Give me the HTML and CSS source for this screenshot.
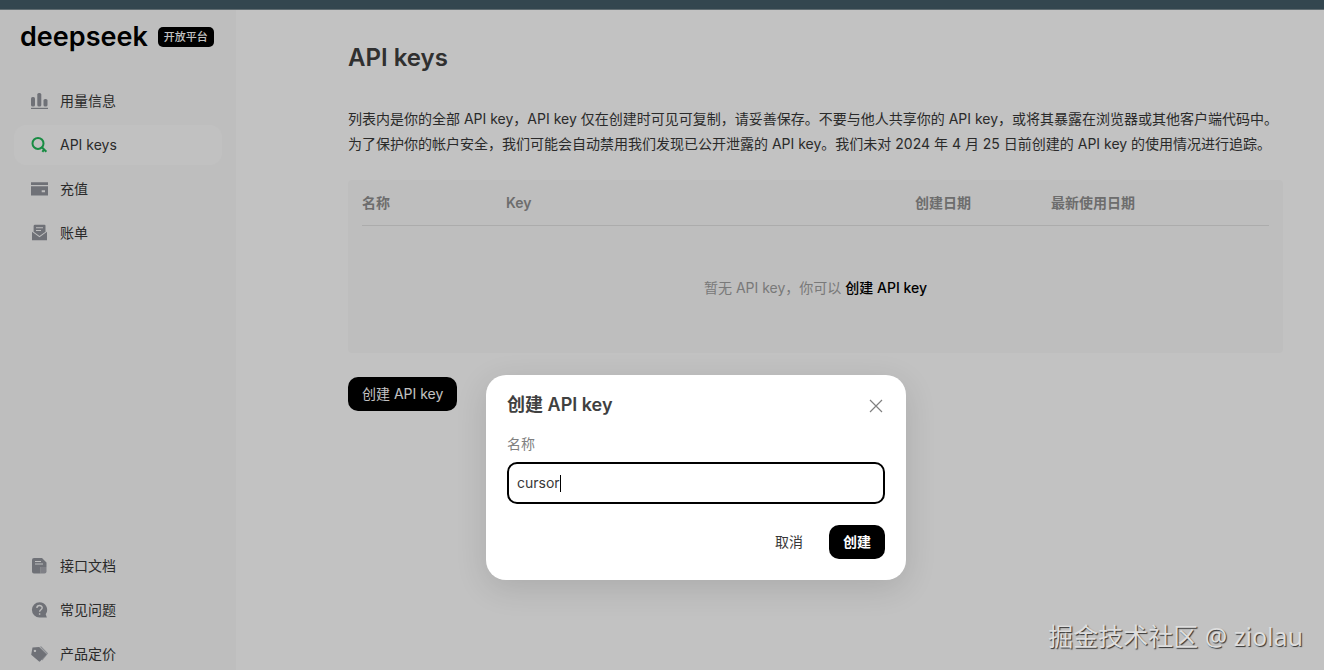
FILE: index.html
```html
<!DOCTYPE html>
<html lang="zh-CN">
<head>
<meta charset="utf-8">
<title>API keys</title>
<link rel="stylesheet" href="styles.css">
</head>
<body>
<div class="topbar"></div>
<div class="app">
  <aside class="sidebar">
    <div class="brand"><span class="wordmark">deepseek</span><span class="badge">开放平台</span></div>
    <nav class="nav">
      <a class="nav-item" href="#usage">
        <svg class="icon" viewBox="0 0 18 18"><rect x="1" y="5" width="4" height="9.500" rx="1.600"/><rect x="7.300" y="1" width="4" height="13.500" rx="1.600"/><rect x="13.500" y="7" width="4" height="7.500" rx="1.600"/><rect x="1" y="15.800" width="17" height="1.200"/></svg>
        用量信息</a>
      <a class="nav-item active" href="#keys">
        <svg class="icon key" viewBox="0 0 18 18"><circle cx="8" cy="7.400" r="5.500"/><path d="M11.600 11 16.400 15.800M14.200 13.400l-1.800 2.400"/></svg>
        API keys</a>
      <a class="nav-item" href="#topup">
        <svg class="icon" viewBox="0 0 18 18"><path d="M1 2.200h17v2.800H1zM1 6.200h17v9.300H1zM11.700 10.200v2h3.300v-2z" fill-rule="evenodd"/></svg>
        充值</a>
      <a class="nav-item" href="#bills">
        <svg class="icon" viewBox="0 0 18 18"><path d="M5 .8h9.500a1 1 0 0 1 1 1v6L9.500 12 3.600 7.800V2.200A1.400 1.400 0 0 1 5 .8zM6 3.200v1.100h7V3.200zM6 6v1.100h5V6z" fill-rule="evenodd"/><path d="M2 7.800l7.500 5.500L17 7.800v8.400H2z"/></svg>
        账单</a>
    </nav>
    <nav class="nav nav-bottom">
      <a class="nav-item" href="#docs">
        <svg class="icon" viewBox="0 0 18 18"><path d="M4 1h8l4.500 4.500V10h-6v6.500H4a2 2 0 0 1-2-2V3a2 2 0 0 1 2-2zM5 4v1h6V4zM5 6.600v1h8v-1z" fill-rule="evenodd"/><path d="M10.500 10h6v4.500a2 2 0 0 1-2 2h-4z" opacity=".8"/></svg>
        接口文档</a>
      <a class="nav-item" href="#faq">
        <svg class="icon" viewBox="0 0 18 18"><path d="M9.500 1.200a7.600 7.600 0 0 1 6.200 12l1.200 3.200H9.500a7.600 7.600 0 0 1 0-15.200z"/><path class="question" d="M6.900 7c0-3.300 5.300-3.200 5.300-.2 0 2-2.600 2-2.600 4M9.600 12.300v1.400"/></svg>
        常见问题</a>
      <a class="nav-item" href="#pricing">
        <svg class="icon" viewBox="0 0 18 18"><path d="M10.500 1.500 17.300 8.500 12 15" class="tag-back"/><path d="M2.500 2.600 9.200 2l7 6.700a1 1 0 0 1 0 1.400l-6 6.200a1 1 0 0 1-1.400 0L1.200 9.700zM4.900 4.700a1.200 1.200 0 1 0 .1 0z" fill-rule="evenodd"/></svg>
        产品定价</a>
    </nav>
  </aside>
  <main class="main">
    <h1 class="title">API keys</h1>
    <p class="intro">列表内是你的全部 API key，API key 仅在创建时可见可复制，请妥善保存。不要与他人共享你的 API key，或将其暴露在浏览器或其他客户端代码中。<br>为了保护你的帐户安全，我们可能会自动禁用我们发现已公开泄露的 API key。我们未对 2024 年 4 月 25 日前创建的 API key 的使用情况进行追踪。</p>
    <div class="panel">
      <table class="keys">
        <colgroup><col class="col-name"><col class="col-key"><col class="col-created"><col></colgroup>
        <thead><tr><th>名称</th><th>Key</th><th>创建日期</th><th>最新使用日期</th></tr></thead>
        <tbody><tr><td colspan="4" class="empty">暂无 API key，你可以 <a href="#create">创建 API key</a></td></tr></tbody>
      </table>
    </div>
    <button class="btn primary" type="button">创建 API key</button>
  </main>
  <div class="overlay">
    <form class="dialog" role="dialog" aria-labelledby="dialog-title">
      <header class="dialog-head">
        <h2 class="dialog-title" id="dialog-title">创建 API key</h2>
        <button class="close" type="button" aria-label="关闭"><svg viewBox="0 0 14 14"><path d="M1 1l12 12M13 1 1 13"/></svg></button>
      </header>
      <label class="label" for="key-name">名称</label>
      <div class="field"><input id="key-name" type="text" value="cursor"><span class="caret"></span></div>
      <footer class="actions">
        <button class="btn plain" type="button">取消</button>
        <button class="btn primary strong" type="button">创建</button>
      </footer>
    </form>
  </div>
  <div class="watermark">掘金技术社区 @ ziolau</div>
</div>
</body>
</html>
```
FILE: styles.css
```css
* { box-sizing: border-box; }
body {
  margin: 0;
  height: 100vh;
  display: flex;
  flex-direction: column;
  overflow: hidden;
  font-family: Inter, "Noto Sans CJK SC", sans-serif;
  font-size: 14px;
  line-height: 20px;
  color: #383838;
}
a { color: inherit; text-decoration: none; }
button, input { font: inherit; color: inherit; }
.topbar { flex: none; height: 10px; background: #33464f; border-bottom: 1px solid #5f6b70; }
.app { position: relative; flex: 1; min-height: 0; display: flex; background: #fff; }

.sidebar {
  flex: none;
  width: 236px;
  padding: 13px 14px 0;
  background: #fafafa;
  display: flex;
  flex-direction: column;
  overflow: hidden;
}
.brand { display: flex; align-items: center; gap: 10px; height: 28px; padding-left: 6px; color: #000; }
.wordmark { font-size: 27px; font-weight: 600; line-height: 28px; }
.badge { padding: 0 6px; border-radius: 5px; background: #000; color: #fff; font-size: 11px; font-weight: 500; line-height: 20px; white-space: nowrap; }
.nav { display: flex; flex-direction: column; gap: 4px; margin-top: 30px; }
.nav-bottom { margin-top: auto; margin-bottom: -4px; }
.nav-item {
  display: flex;
  align-items: center;
  gap: 12px;
  height: 40px;
  padding: 0 16px;
  border-radius: 12px;
}
.active { background: #fefefe; }
.icon { width: 18px; height: 18px; fill: #92959d; }
.key { fill: none; stroke: #20b858; stroke-width: 2; }
.question { fill: none; stroke: #fafafa; stroke-width: 1.4; }
.tag-back { fill: none; stroke: #b8bbc2; stroke-width: 1.2; }

.main { flex: 1; min-width: 0; padding: 32px 41px 0 112px; }
.title { margin: 0 0 32px; font-size: 24px; line-height: 32px; font-weight: 600; color: #404040; }
.intro { margin: 0 0 24px; line-height: 25px; }
.panel { margin-bottom: 24px; padding: 0 14px; border-radius: 4px; background: #fafafa; }
.keys { width: 100%; border-collapse: collapse; table-layout: fixed; }
.col-name { width: 144px; }
.col-key { width: 409px; }
.col-created { width: 136px; }
.keys th { height: 45px; padding: 1px 0 0; border-bottom: 1px solid #e2e2e2; text-align: left; font-weight: 600; color: #909090; }
.empty { height: 128px; padding: 0 0 3px; text-align: center; color: #a0a0a0; }
.empty a { color: #000; font-weight: 500; }

.btn { height: 34px; padding: 0 14px; border: 0; border-radius: 10px; white-space: nowrap; }
.primary { background: #000; color: #fff; }
.plain { background: transparent; }
.strong { font-weight: 600; }

.overlay {
  position: absolute;
  inset: 0;
  display: flex;
  justify-content: center;
  align-items: flex-start;
  padding: 365px 0 0 68px;
  background: rgba(0, 0, 0, 0.24);
}
.dialog {
  width: 420px;
  padding: 16px 21px 21px;
  border-radius: 20px;
  background: #fff;
  box-shadow: 0 8px 32px rgba(0, 0, 0, 0.12);
}
.dialog-head { display: flex; justify-content: space-between; align-items: center; height: 28px; }
.dialog-title { margin: 0; font-size: 18px; line-height: 28px; font-weight: 600; color: #404040; }
.close { width: 18px; height: 20px; padding: 4px 2px 2px; border: 0; background: none; display: flex; }
.close svg { width: 14px; height: 14px; fill: none; stroke: #808080; stroke-width: 1.2; }
.label { display: block; margin: 15px 0 8px; color: #808080; }
.field {
  display: flex;
  align-items: center;
  height: 42px;
  padding: 0 8px;
  border: 2px solid #000;
  border-radius: 10px;
}
.field input { field-sizing: content; padding: 0; border: 0; outline: 0; background: none; }
.caret { width: 1px; height: 17px; background: #000; }
.actions { display: flex; justify-content: flex-end; gap: 12px; margin-top: 21px; }

.watermark {
  position: absolute;
  right: 21px;
  bottom: 16px;
  font-family: "Noto Sans", "Noto Sans CJK SC", sans-serif;
  font-size: 25px;
  line-height: 36px;
  color: #dedede;
  text-shadow: 1px 1px 1px #333;
}
```
